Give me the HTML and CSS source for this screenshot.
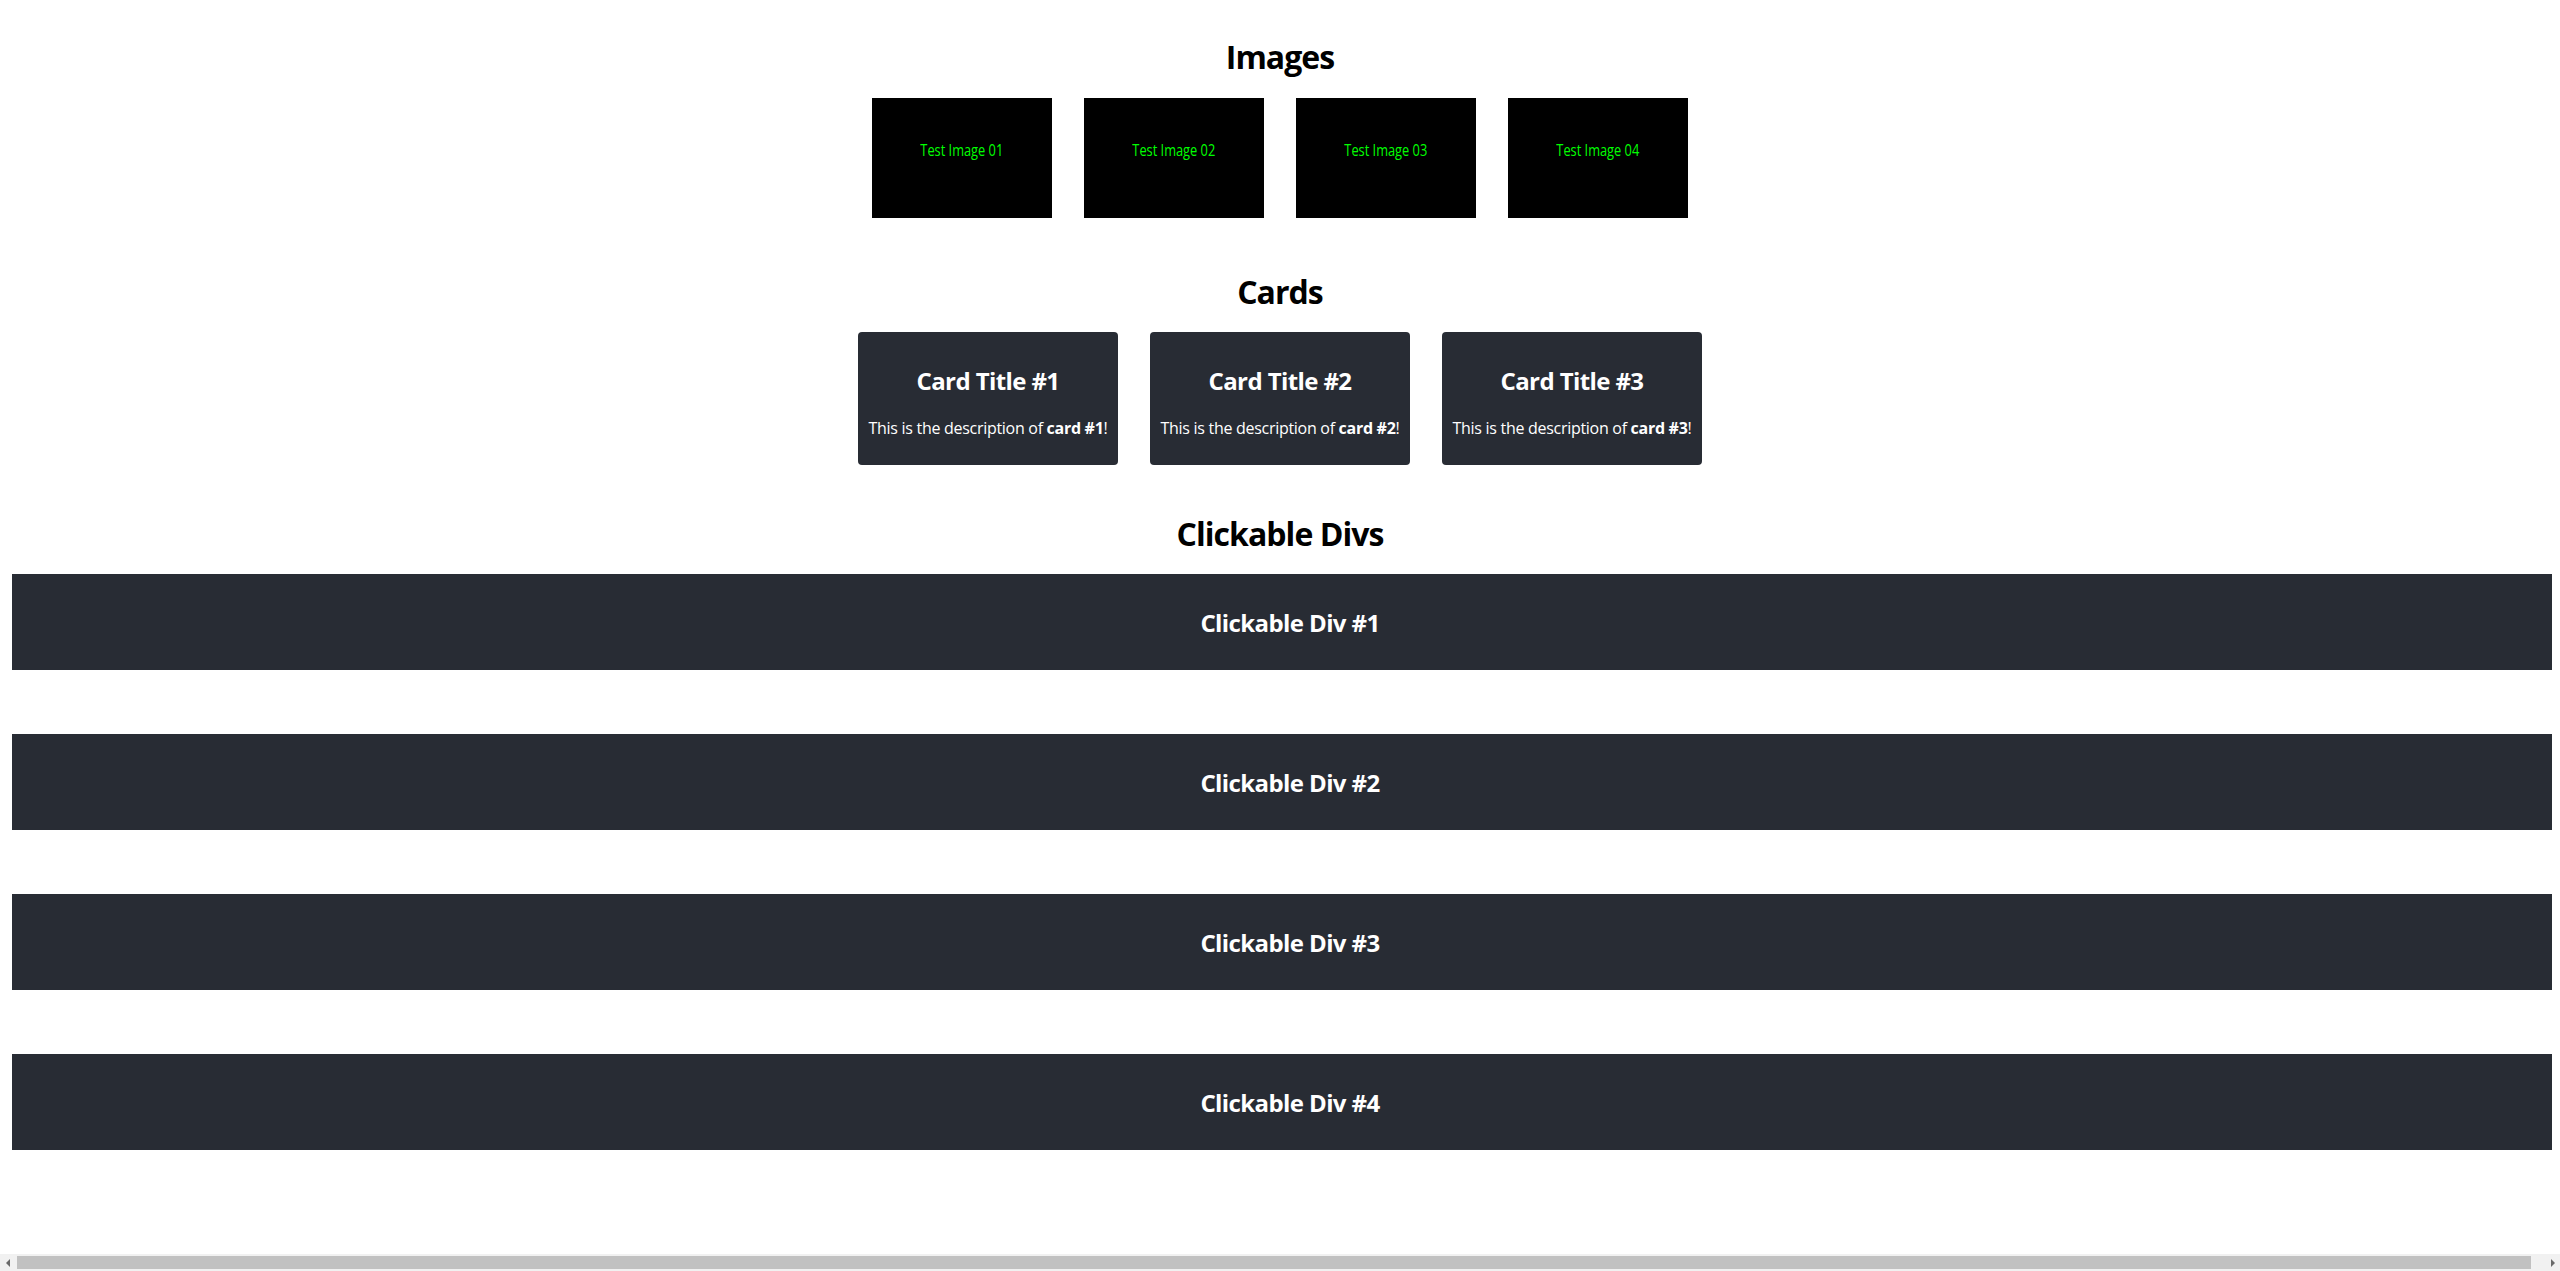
FILE: index.html
```html
<!DOCTYPE html>
<html lang="en">
<head>
<meta charset="utf-8">
<title>Test Page</title>
<link rel="stylesheet" href="styles.css">
</head>
<body>
  <section class="section section-images">
    <h1 class="section-title">Images</h1>
    <div class="image-row">
      <div class="test-image"><span class="test-image-label">Test Image 01</span></div>
      <div class="test-image"><span class="test-image-label">Test Image 02</span></div>
      <div class="test-image"><span class="test-image-label">Test Image 03</span></div>
      <div class="test-image"><span class="test-image-label">Test Image 04</span></div>
    </div>
  </section>

  <section class="section section-cards">
    <h1 class="section-title">Cards</h1>
    <div class="card-row">
      <div class="card">
        <h2 class="card-title">Card Title #1</h2>
        <p class="card-desc">This is the description of <strong>card #1</strong>!</p>
      </div>
      <div class="card">
        <h2 class="card-title">Card Title #2</h2>
        <p class="card-desc">This is the description of <strong>card #2</strong>!</p>
      </div>
      <div class="card">
        <h2 class="card-title">Card Title #3</h2>
        <p class="card-desc">This is the description of <strong>card #3</strong>!</p>
      </div>
    </div>
  </section>

  <section class="section-clickables">
    <h1 class="section-title">Clickable Divs</h1>
    <div class="clickable-list">
      <div class="clickable"><h2 class="clickable-label">Clickable Div #1</h2></div>
      <div class="clickable"><h2 class="clickable-label">Clickable Div #2</h2></div>
      <div class="clickable"><h2 class="clickable-label">Clickable Div #3</h2></div>
      <div class="clickable"><h2 class="clickable-label">Clickable Div #4</h2></div>
    </div>
  </section>

  <div class="hscrollbar" aria-hidden="true">
    <div class="sb-btn sb-left"></div>
    <div class="sb-track"><div class="sb-thumb"></div></div>
    <div class="sb-btn sb-right"></div>
  </div>
</body>
</html>
```
FILE: styles.css
```css
html {
  background: #ffffff;
  overflow: hidden;
}

body {
  margin: 8px;
  font-family: "Open Sans", "Noto Sans", "Liberation Sans", sans-serif;
  color: #000000;
}

.section {
  display: flex;
  flex-direction: column;
  align-items: center;
}

.section-title {
  margin: 0;
  font-size: 32px;
  line-height: 40px;
  font-weight: 700;
  letter-spacing: -0.03em;
  text-align: center;
}

.section-images {
  padding-top: 29px;
}

.section-cards {
  padding-top: 54px;
}

.section-clickables {
  padding-top: 49px;
}

/* Images */
.image-row {
  display: flex;
  gap: 32px;
  margin-top: 21px;
}

.test-image {
  width: 180px;
  height: 120px;
  background: #000000;
  box-sizing: border-box;
  padding-top: 42px;
  text-align: center;
  color: #00ff00;
  font-family: "Open Sans", "Noto Sans", sans-serif;
  font-size: 16px;
  line-height: 20px;
}

.test-image-label {
  display: inline-block;
  transform: scaleX(0.8);
  transform-origin: center;
}

/* Cards */
.card-row {
  display: flex;
  gap: 32px;
  margin-top: 20px;
}

.card {
  width: 260px;
  height: 133px;
  box-sizing: border-box;
  padding-top: 33px;
  background: #282c34;
  border-radius: 4px;
  color: #ffffff;
  text-align: center;
}

.card-title {
  margin: 0;
  font-size: 24px;
  line-height: 32px;
  font-weight: 700;
  letter-spacing: -0.025em;
}

.card-desc {
  margin: 20px 0 0;
  font-size: 16px;
  line-height: 22px;
  letter-spacing: -0.018em;
}

.card-desc strong {
  font-weight: 700;
}

/* Clickable divs: run off the right edge of the window */
.clickable-list {
  margin-top: 20px;
  margin-left: 4px;
  width: calc(100vw - 12px);
}

.clickable {
  height: 96px;
  box-sizing: border-box;
  padding: 33px 0 0 8px;
  margin-bottom: 64px;
  background: #282c34;
  box-shadow: 24px 0 0 #282c34;
  color: #ffffff;
  text-align: center;
  cursor: pointer;
}

.clickable:last-child {
  margin-bottom: 0;
}

.clickable-label {
  margin: 0;
  font-size: 24px;
  line-height: 32px;
  font-weight: 700;
  letter-spacing: -0.025em;
}

/* Window horizontal scrollbar (overlay at the bottom edge) */
.hscrollbar {
  position: fixed;
  left: 0;
  right: 0;
  bottom: 0;
  height: 17px;
  display: flex;
  background: #f1f1f1;
}

.sb-btn {
  width: 17px;
  flex: none;
  display: flex;
  align-items: center;
  justify-content: center;
}

.sb-left::before,
.sb-right::before {
  content: "";
  width: 0;
  height: 0;
  border-top: 4px solid transparent;
  border-bottom: 4px solid transparent;
}

.sb-left::before {
  border-right: 4px solid #6a6a6a;
  margin-right: 2px;
}

.sb-right::before {
  border-left: 4px solid #6a6a6a;
  margin-left: 2px;
}

.sb-track {
  flex: 1;
  box-sizing: border-box;
  padding: 2px 12px 2px 0;
  display: flex;
}

.sb-thumb {
  flex: 1;
  background: #c1c1c1;
}
```
